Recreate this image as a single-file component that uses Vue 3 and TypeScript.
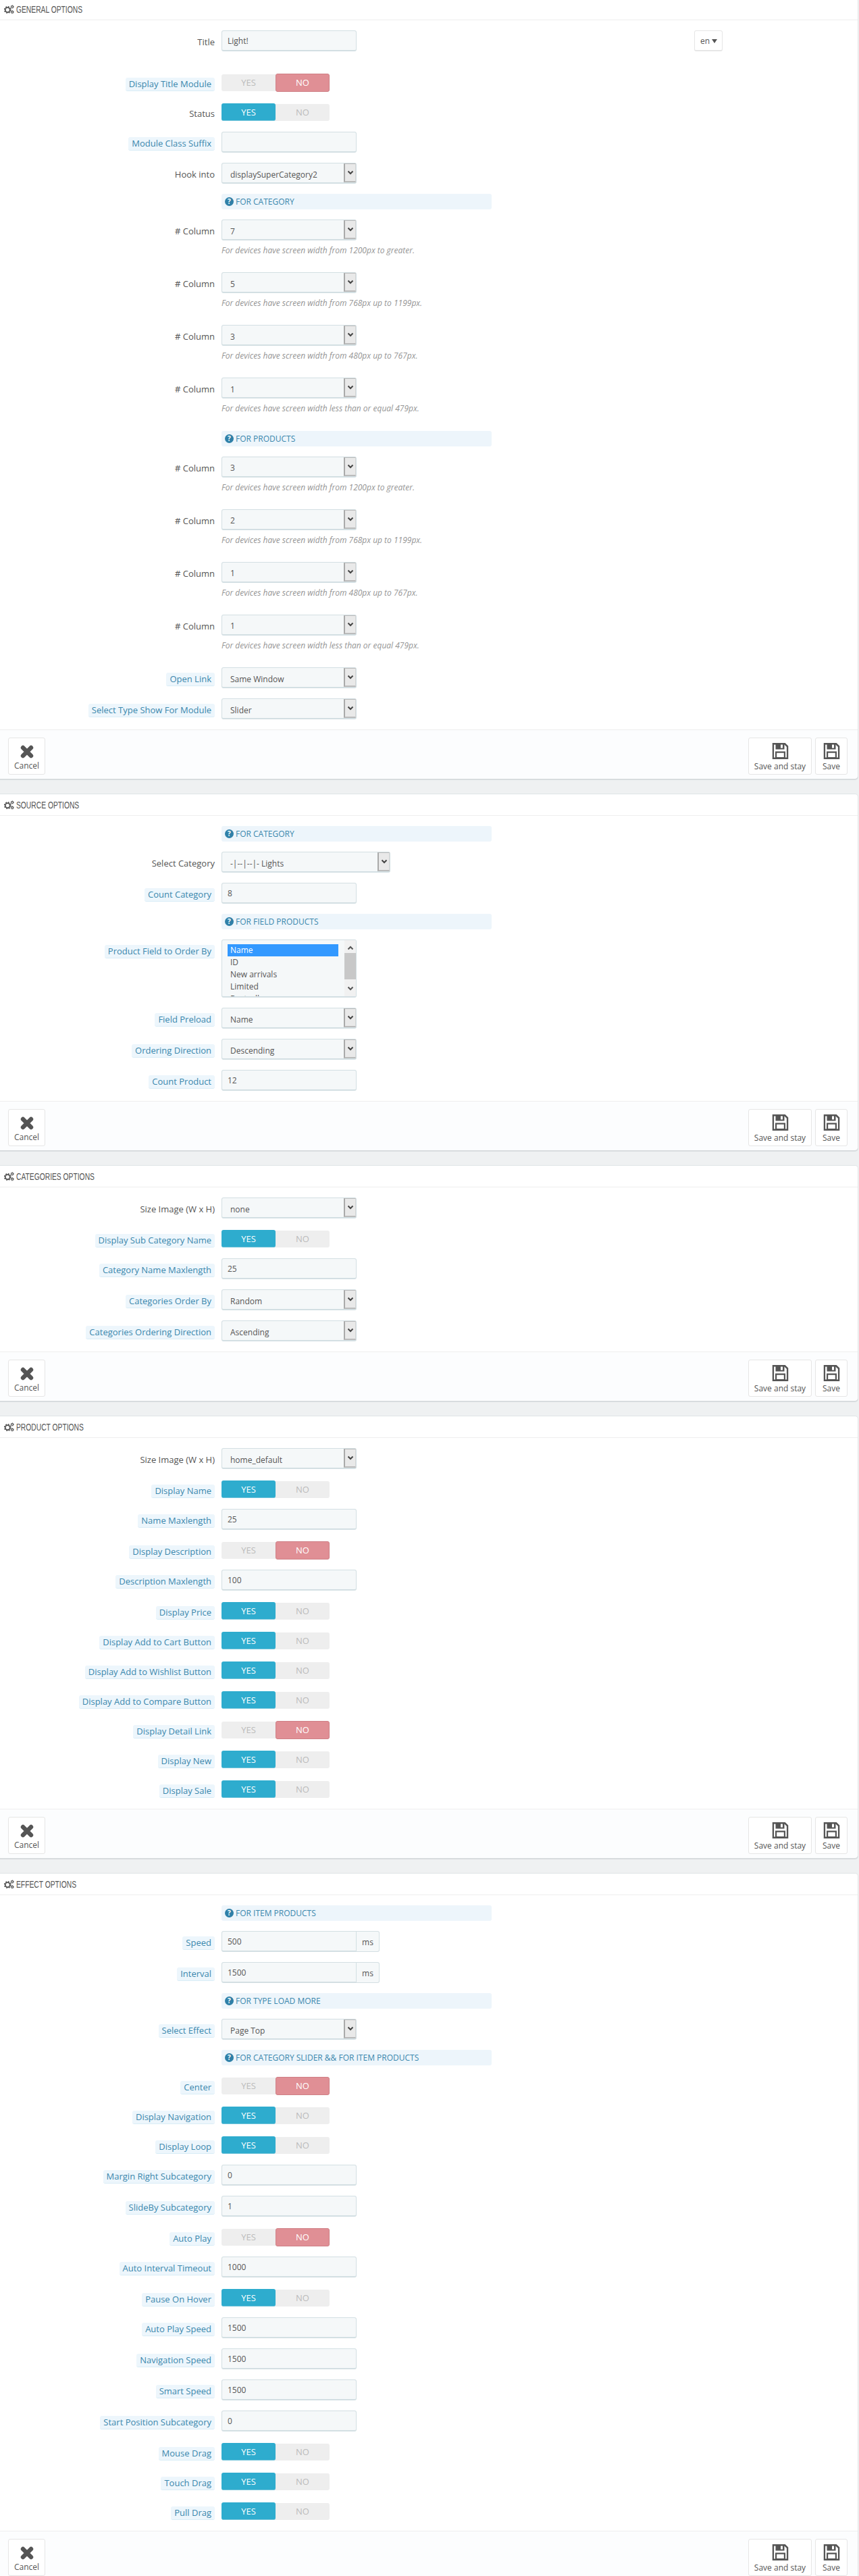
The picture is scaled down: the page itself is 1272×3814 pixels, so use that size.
<script setup lang="ts">
type Field =
  | { kind: 'input'; label: string; value: string; plain?: boolean; unit?: string; lang?: boolean }
  | { kind: 'select'; label: string; value: string; plain?: boolean; help?: string; wide?: boolean }
  | { kind: 'switch'; label: string; on: boolean; plain?: boolean }
  | { kind: 'list'; label: string; options: string[] }
  | { kind: 'bar'; text: string };

interface Panel {
  title: string;
  fields: Field[];
}

const input = (label: string, value: string): Field => ({ kind: 'input', label, value });
const select = (label: string, value: string): Field => ({ kind: 'select', label, value });
const toggle = (label: string, on: boolean): Field => ({ kind: 'switch', label, on });
const bar = (text: string): Field => ({ kind: 'bar', text });
const column = (value: string, help: string): Field => ({
  kind: 'select',
  label: '# Column',
  value,
  plain: true,
  help,
});

const HELP_LG = 'For devices have screen width from 1200px to greater.';
const HELP_MD = 'For devices have screen width from 768px up to 1199px.';
const HELP_SM = 'For devices have screen width from 480px up to 767px.';
const HELP_XS = 'For devices have screen width less than or equal 479px.';

const panels: Panel[] = [
  {
    title: 'General Options',
    fields: [
      { kind: 'input', label: 'Title', value: 'Light!', plain: true, lang: true },
      toggle('Display Title Module', false),
      { kind: 'switch', label: 'Status', on: true, plain: true },
      input('Module Class Suffix', ''),
      { kind: 'select', label: 'Hook into', value: 'displaySuperCategory2', plain: true },
      bar('For Category'),
      column('7', HELP_LG),
      column('5', HELP_MD),
      column('3', HELP_SM),
      column('1', HELP_XS),
      bar('For Products'),
      column('3', HELP_LG),
      column('2', HELP_MD),
      column('1', HELP_SM),
      column('1', HELP_XS),
      select('Open Link', 'Same Window'),
      select('Select Type Show For Module', 'Slider'),
    ],
  },
  {
    title: 'Source Options',
    fields: [
      bar('For Category'),
      { kind: 'select', label: 'Select Category', value: '-|--|--|- Lights', plain: true, wide: true },
      input('Count Category', '8'),
      bar('For Field Products'),
      {
        kind: 'list',
        label: 'Product Field to Order By',
        options: ['Name', 'ID', 'New arrivals', 'Limited', 'Bestsellers'],
      },
      select('Field Preload', 'Name'),
      select('Ordering Direction', 'Descending'),
      input('Count Product', '12'),
    ],
  },
  {
    title: 'Categories Options',
    fields: [
      { kind: 'select', label: 'Size Image (W x H)', value: 'none', plain: true },
      toggle('Display Sub Category Name', true),
      input('Category Name Maxlength', '25'),
      select('Categories Order By', 'Random'),
      select('Categories Ordering Direction', 'Ascending'),
    ],
  },
  {
    title: 'Product Options',
    fields: [
      { kind: 'select', label: 'Size Image (W x H)', value: 'home_default', plain: true },
      toggle('Display Name', true),
      input('Name Maxlength', '25'),
      toggle('Display Description', false),
      input('Description Maxlength', '100'),
      toggle('Display Price', true),
      toggle('Display Add to Cart Button', true),
      toggle('Display Add to Wishlist Button', true),
      toggle('Display Add to Compare Button', true),
      toggle('Display Detail Link', false),
      toggle('Display New', true),
      toggle('Display Sale', true),
    ],
  },
  {
    title: 'Effect Options',
    fields: [
      bar('For Item Products'),
      { kind: 'input', label: 'Speed', value: '500', unit: 'ms' },
      { kind: 'input', label: 'Interval', value: '1500', unit: 'ms' },
      bar('For Type Load More'),
      select('Select Effect', 'Page Top'),
      bar('For Category Slider && For Item Products'),
      toggle('Center', false),
      toggle('Display Navigation', true),
      toggle('Display Loop', true),
      input('Margin Right Subcategory', '0'),
      input('SlideBy Subcategory', '1'),
      toggle('Auto Play', false),
      input('Auto Interval Timeout', '1000'),
      toggle('Pause On Hover', true),
      input('Auto Play Speed', '1500'),
      input('Navigation Speed', '1500'),
      input('Smart Speed', '1500'),
      input('Start Position Subcategory', '0'),
      toggle('Mouse Drag', true),
      toggle('Touch Drag', true),
      toggle('Pull Drag', true),
    ],
  },
];
</script>

<template>
  <div class="page">
    <form v-for="panel in panels" :key="panel.title" class="panel" @submit.prevent>
      <h3 class="panel-heading">
        <svg class="cogs" viewBox="0 0 16 14" width="15" height="14" aria-hidden="true">
          <circle cx="5.6" cy="7.6" r="3.7" fill="none" stroke="#555" stroke-width="1.9" />
          <circle cx="5.6" cy="7.6" r="5" fill="none" stroke="#555" stroke-width="1.7" stroke-dasharray="2 1.93" />
          <circle cx="13" cy="2.8" r="1.5" fill="none" stroke="#555" stroke-width="1.2" />
          <circle cx="13" cy="2.8" r="2.4" fill="none" stroke="#555" stroke-width="0.9" stroke-dasharray="1 1.01" />
          <circle cx="13" cy="11" r="1.5" fill="none" stroke="#555" stroke-width="1.2" />
          <circle cx="13" cy="11" r="2.4" fill="none" stroke="#555" stroke-width="0.9" stroke-dasharray="1 1.01" />
        </svg>
        <span class="heading-text">{{ panel.title }}</span>
      </h3>

      <div class="panel-body">
        <template v-for="(field, index) in panel.fields" :key="index">
          <div v-if="field.kind === 'bar'" class="row bar-row">
            <div class="bar">
              <span class="help-icon">?</span>
              {{ field.text }}
            </div>
          </div>

          <div
            v-else
            class="row"
            :class="[`row-${field.kind}`, { 'row-lang': field.kind === 'input' && field.lang }]"
          >
            <div class="label-col">
              <span :class="field.plain ? 'label-plain' : 'label-hint'">{{ field.label }}</span>
            </div>

            <div class="control">
              <template v-if="field.kind === 'input'">
                <div v-if="field.unit" class="input-group">
                  <input type="text" :value="field.value" />
                  <span class="addon">{{ field.unit }}</span>
                </div>
                <input v-else type="text" :value="field.value" />
                <button v-if="field.lang" type="button" class="lang">en<i class="lang-caret"></i></button>
              </template>

              <template v-else-if="field.kind === 'select'">
                <div class="select" :class="{ wide: field.wide }">
                  <select>
                    <option>{{ field.value }}</option>
                  </select>
                  <span class="select-btn">
                    <svg viewBox="0 0 10 8" width="10" height="8" aria-hidden="true">
                      <path d="M1.5 1.5 5 5l3.5-3.5" fill="none" stroke="#444" stroke-width="2" />
                    </svg>
                  </span>
                </div>
                <p v-if="field.help" class="help">{{ field.help }}</p>
              </template>

              <div v-else-if="field.kind === 'switch'" class="switch">
                <span class="yes" :class="{ active: field.on }">YES</span>
                <span class="no" :class="{ active: !field.on }">NO</span>
              </div>

              <div v-else class="listbox">
                <ul>
                  <li v-for="(opt, i) in field.options" :key="opt" :class="{ selected: i === 0 }">{{ opt }}</li>
                </ul>
                <div class="scrollbar">
                  <svg viewBox="0 0 10 8" width="10" height="8" aria-hidden="true">
                    <path d="M1.5 6.5 5 3l3.5 3.5" fill="none" stroke="#555" stroke-width="2" />
                  </svg>
                  <span class="thumb"></span>
                  <svg viewBox="0 0 10 8" width="10" height="8" aria-hidden="true">
                    <path d="M1.5 1.5 5 5l3.5-3.5" fill="none" stroke="#555" stroke-width="2" />
                  </svg>
                </div>
              </div>
            </div>
          </div>
        </template>
      </div>

      <div class="panel-footer">
        <button type="button" class="action">
          <svg viewBox="0 0 20 20" width="20" height="20" aria-hidden="true">
            <path d="M4 4l12 12M16 4 4 16" fill="none" stroke="#555" stroke-width="6.4" stroke-linecap="round" />
          </svg>
          Cancel
        </button>
        <span class="spacer"></span>
        <button type="button" class="action save-stay">
          <svg viewBox="0 0 24 24" width="25" height="24" aria-hidden="true">
            <use href="#floppy" />
          </svg>
          Save and stay
        </button>
        <button type="button" class="action save">
          <svg viewBox="0 0 24 24" width="25" height="24" aria-hidden="true">
            <use href="#floppy" />
          </svg>
          Save
        </button>
      </div>
    </form>

    <svg width="0" height="0" class="defs" aria-hidden="true">
      <symbol id="floppy" viewBox="0 0 24 24">
        <path d="M1.3 1.3H18.6L22.7 5.4V22.7H1.3Z" fill="none" stroke="#555" stroke-width="2.6" />
        <path d="M5 1h13v8.5H5z" fill="#555" />
        <path d="M12.5 2.5h3v5h-3z" fill="#fff" />
        <path d="M5.6 13.6h12.8V22H5.6z" fill="#fff" stroke="#555" stroke-width="2.2" />
      </symbol>
    </svg>
  </div>
</template>

<style>
html,
body {
  margin: 0;
  background: #eff1f2;
}
</style>

<style scoped>
.page {
  height: 3814px;
  overflow: hidden;
  background: #eff1f2;
  color: #555;
  font-family: 'Open Sans', 'Liberation Sans', sans-serif;
  font-size: 12px;
}

.defs {
  position: absolute;
}

.panel {
  width: 1271px;
  margin-bottom: 22px;
  background: #fff;
  border-top: 1px solid #dfe4e6;
  border-right: 1px solid #e6e6e6;
  border-radius: 0 5px 5px 0;
  box-shadow: 0 2px 0 #d8dcde;
  box-sizing: border-box;
}

.panel:first-child {
  margin-top: -3px;
}

.panel-heading {
  display: flex;
  align-items: center;
  gap: 3px;
  height: 31px;
  margin: 0;
  padding-left: 6px;
  border-bottom: 1px solid #eee;
  color: #555;
  font-family: 'Liberation Sans', sans-serif;
  font-size: 14.5px;
  font-weight: 400;
  text-transform: uppercase;
}

/* no condensed face here, so squeeze the regular one */
.heading-text {
  display: inline-block;
  transform: scaleX(0.71);
  transform-origin: left center;
  white-space: nowrap;
}

.panel-body {
  padding-top: 15px;
}

.row {
  display: flex;
  margin-bottom: 15px;
}

.row-lang {
  margin-bottom: 31px;
}

.row-switch {
  padding-top: 3px;
  height: 26px;
}

.label-col {
  flex: none;
  width: 318px;
  padding-top: 7px;
  font-size: 13px;
  line-height: 20px;
  text-align: right;
}

.row-switch .label-col {
  margin-top: -3px;
}

.label-hint {
  display: inline-block;
  height: 20px;
  padding: 0 5px;
  border-bottom: 1px solid #d9edf7;
  border-radius: 3px;
  background: #edf6fc;
  color: #3a87ad;
  line-height: 19px;
  box-sizing: border-box;
}

.control {
  margin-left: 10px;
}

.row-lang .control {
  display: flex;
  justify-content: space-between;
  width: 742px;
}

input {
  display: block;
  width: 200px;
  height: 31px;
  padding: 0 8px;
  background: #f5f8f9;
  border: 1px solid #d3dfe3;
  border-bottom-width: 2px;
  border-radius: 3px;
  color: #555;
  font: inherit;
  box-sizing: border-box;
}

.input-group {
  display: flex;
  width: 234px;
}

.input-group input {
  border-radius: 3px 0 0 3px;
}

.addon {
  flex: 1;
  height: 31px;
  background: #f5f8f9;
  border: 1px solid #d3dfe3;
  border-left: 0;
  border-radius: 0 3px 3px 0;
  line-height: 31px;
  text-align: center;
  box-sizing: border-box;
}

.lang {
  width: 42px;
  height: 31px;
  padding: 0 0 0 1px;
  background: #fff;
  border: 1px solid #e6e6e6;
  border-bottom-width: 2px;
  border-radius: 3px;
  color: #555;
  font: inherit;
}

.lang-caret {
  display: inline-block;
  margin-left: 3px;
  border-top: 6px solid #555;
  border-left: 4px solid transparent;
  border-right: 4px solid transparent;
  vertical-align: 1px;
}

.select {
  position: relative;
  width: 200px;
  height: 31px;
}

.select.wide {
  width: 250px;
}

select {
  display: block;
  width: 100%;
  height: 31px;
  padding: 4px 24px 0 12px;
  appearance: none;
  background: #f5f8f9;
  border: 1px solid #d3dfe3;
  border-bottom-width: 2px;
  border-radius: 3px;
  color: #555;
  font: inherit;
  box-sizing: border-box;
}

.select-btn {
  position: absolute;
  top: 1px;
  right: 1px;
  display: flex;
  justify-content: center;
  width: 18px;
  height: 28px;
  padding-top: 9px;
  background: #e9e9e9;
  border: 1px solid #a9a9a9;
  border-width: 1px 1px 2px 2px;
  border-color: #bbb #d5d5d5 #bbb #aaa;
  box-sizing: border-box;
}

.help {
  width: 500px;
  height: 17px;
  margin: 6px 0 9.15px;
  color: #959595;
  font-style: italic;
  line-height: 17px;
}

.switch {
  display: flex;
  width: 160px;
  height: 25px;
  background: #eee;
  border-radius: 3px;
  font-size: 13px;
  line-height: 25px;
  text-align: center;
}

.switch span {
  width: 80px;
  color: #bbb;
}

.switch .yes.active {
  height: 26px;
  margin-top: -1px;
  background: #2eacce;
  border-bottom: 1px solid #72c3d9;
  border-radius: 3px;
  color: #fff;
  line-height: 27px;
  box-sizing: border-box;
}

.switch .no.active {
  height: 27px;
  margin-top: -1px;
  background: #e08f95;
  border: 1px solid #cf7f85;
  border-radius: 3px;
  color: #fff;
  line-height: 25px;
  box-sizing: border-box;
}

.listbox {
  display: flex;
  width: 200px;
  height: 86px;
  overflow: hidden;
  background: #f5f8f9;
  border: 1px solid #d3dfe3;
  border-bottom-width: 2px;
  border-radius: 3px;
  box-sizing: border-box;
}

.listbox ul {
  flex: 1;
  margin: 0;
  padding: 6px 9px 0 8px;
  list-style: none;
  line-height: 18px;
}

.listbox li {
  height: 18px;
  padding-left: 4px;
}

.listbox li.selected {
  background: #39f;
  color: #fff;
}

.scrollbar {
  position: relative;
  display: flex;
  flex-direction: column;
  align-items: center;
  justify-content: space-between;
  flex: none;
  width: 17px;
  padding: 7px 0;
  background: #f1f1f1;
  box-sizing: border-box;
}

.thumb {
  position: absolute;
  top: 19px;
  left: 0;
  width: 17px;
  height: 39px;
  background: #c8c8c8;
}

.bar {
  display: flex;
  align-items: center;
  gap: 3px;
  width: 400px;
  height: 23px;
  margin-left: 328px;
  padding-left: 5px;
  background: #edf5fb;
  border-radius: 3px;
  color: #3a87ad;
  text-transform: uppercase;
  box-sizing: border-box;
}

.help-icon {
  display: inline-block;
  width: 13px;
  height: 13px;
  background: #2f80a8;
  border-radius: 50%;
  color: #fff;
  font-size: 10px;
  font-weight: 700;
  line-height: 13px;
  text-align: center;
}

.panel-footer {
  display: flex;
  gap: 5px;
  height: 73px;
  padding: 11px 15px 0 12px;
  background: #fcfdfe;
  border-top: 1px solid #eee;
  border-radius: 0 0 5px;
  box-sizing: border-box;
}

.spacer {
  flex: 1;
}

.action {
  display: flex;
  flex-direction: column;
  align-items: center;
  width: 55px;
  height: 55px;
  padding: 10px 0 0;
  background: #fff;
  border: 1px solid #e6e6e6;
  border-radius: 3px;
  color: #555;
  font: inherit;
  line-height: 20px;
  box-sizing: border-box;
}

.action svg {
  margin-bottom: 1px;
}

.save-stay,
.save {
  padding-top: 7px;
}

.save-stay {
  width: 94px;
}

.save {
  width: 48px;
}
</style>
